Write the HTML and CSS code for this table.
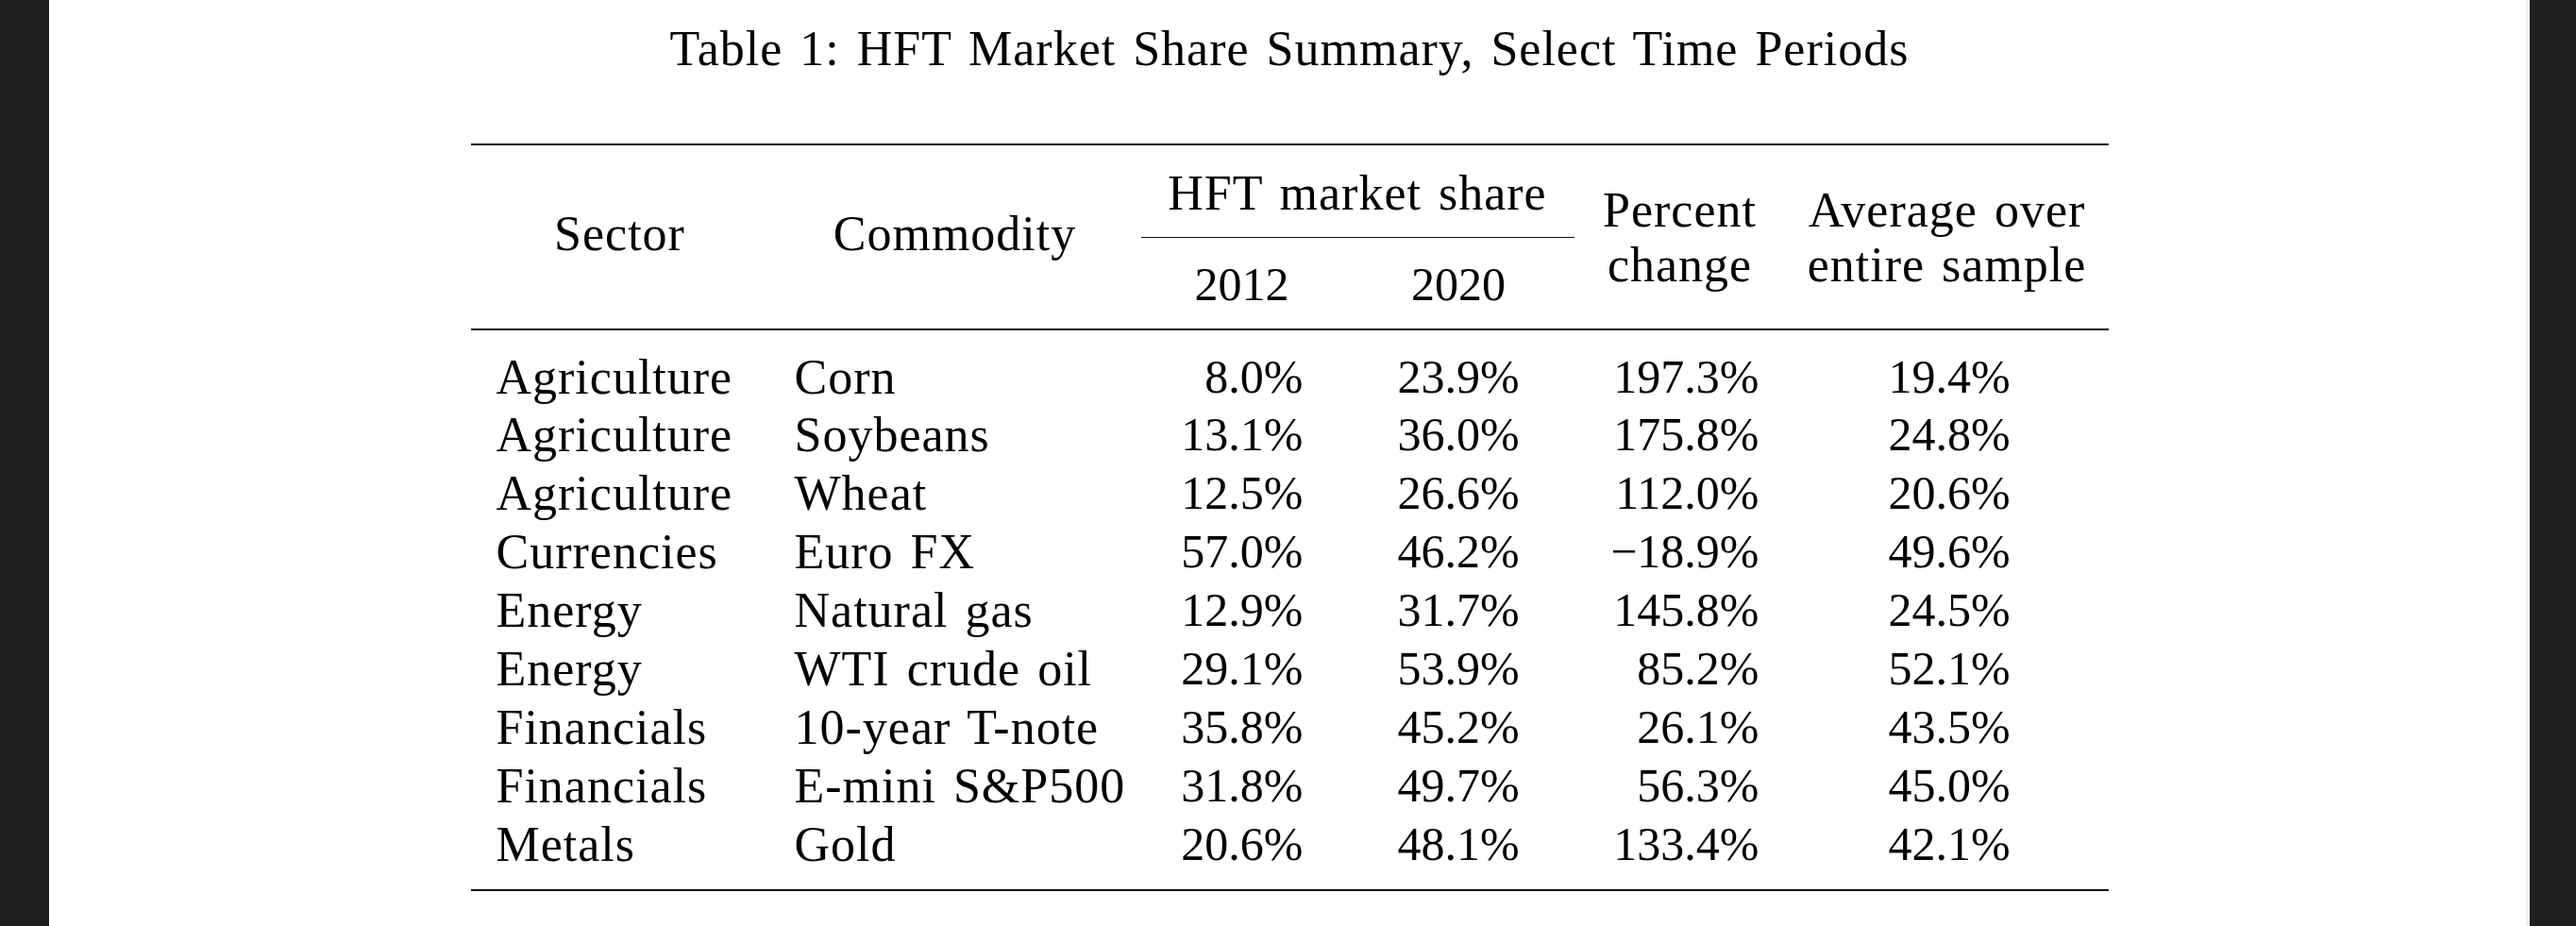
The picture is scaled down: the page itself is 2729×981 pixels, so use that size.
FILE: index.html
```html
<!DOCTYPE html>
<html lang="en">
<head>
<meta charset="utf-8">
<title>Table 1: HFT Market Share Summary, Select Time Periods</title>
<link rel="stylesheet" href="styles.css">
</head>
<body>
<div class="page">
  <h1 class="caption">Table 1: HFT Market Share Summary, Select Time Periods</h1>
  <div class="tbl">
    <div class="thead">
      <div class="h-sector">Sector</div>
      <div class="h-commodity">Commodity</div>
      <div class="h-hft">HFT market share</div>
      <div class="h-y1 num">2012</div>
      <div class="h-y2 num">2020</div>
      <div class="h-pct">Percent<br>change</div>
      <div class="h-avg">Average over<br>entire sample</div>
    </div>
    <div class="tbody">
      <div class="txt">Agriculture</div><div class="txt">Corn</div><div class="num c3"><span class="nb">8.0%</span></div><div class="num c4"><span class="nb">23.9%</span></div><div class="num c5"><span class="nb">197.3%</span></div><div class="num c6"><span class="nb">19.4%</span></div>
      <div class="txt">Agriculture</div><div class="txt">Soybeans</div><div class="num c3"><span class="nb">13.1%</span></div><div class="num c4"><span class="nb">36.0%</span></div><div class="num c5"><span class="nb">175.8%</span></div><div class="num c6"><span class="nb">24.8%</span></div>
      <div class="txt">Agriculture</div><div class="txt">Wheat</div><div class="num c3"><span class="nb">12.5%</span></div><div class="num c4"><span class="nb">26.6%</span></div><div class="num c5"><span class="nb">112.0%</span></div><div class="num c6"><span class="nb">20.6%</span></div>
      <div class="txt">Currencies</div><div class="txt">Euro FX</div><div class="num c3"><span class="nb">57.0%</span></div><div class="num c4"><span class="nb">46.2%</span></div><div class="num c5"><span class="nb">&minus;18.9%</span></div><div class="num c6"><span class="nb">49.6%</span></div>
      <div class="txt">Energy</div><div class="txt">Natural gas</div><div class="num c3"><span class="nb">12.9%</span></div><div class="num c4"><span class="nb">31.7%</span></div><div class="num c5"><span class="nb">145.8%</span></div><div class="num c6"><span class="nb">24.5%</span></div>
      <div class="txt">Energy</div><div class="txt">WTI crude oil</div><div class="num c3"><span class="nb">29.1%</span></div><div class="num c4"><span class="nb">53.9%</span></div><div class="num c5"><span class="nb">85.2%</span></div><div class="num c6"><span class="nb">52.1%</span></div>
      <div class="txt">Financials</div><div class="txt">10-year T-note</div><div class="num c3"><span class="nb">35.8%</span></div><div class="num c4"><span class="nb">45.2%</span></div><div class="num c5"><span class="nb">26.1%</span></div><div class="num c6"><span class="nb">43.5%</span></div>
      <div class="txt">Financials</div><div class="txt">E-mini S&amp;P500</div><div class="num c3"><span class="nb">31.8%</span></div><div class="num c4"><span class="nb">49.7%</span></div><div class="num c5"><span class="nb">56.3%</span></div><div class="num c6"><span class="nb">45.0%</span></div>
      <div class="txt">Metals</div><div class="txt">Gold</div><div class="num c3"><span class="nb">20.6%</span></div><div class="num c4"><span class="nb">48.1%</span></div><div class="num c5"><span class="nb">133.4%</span></div><div class="num c6"><span class="nb">42.1%</span></div>
    </div>
  </div>
</div>
</body>
</html>
```
FILE: styles.css
```css
* { box-sizing: border-box; }
html, body { margin: 0; padding: 0; }
body {
  background: #1f1f1f;
  font-family: "Liberation Serif", "Times New Roman", serif;
  color: #000;
  width: 2729px;
  height: 981px;
  overflow: hidden;
}
.page {
  margin-left: 52px;
  width: 2628px;
  height: 981px;
  background: #fff;
  box-shadow: inset -4px 0 0 #efefef;
  padding-top: 22px;
}
.caption {
  margin: 0;
  font-weight: normal;
  font-size: 52px;
  line-height: 60px;
  letter-spacing: 1px;
  word-spacing: 4px;
  text-align: center;
}
.tbl {
  width: 1735px;
  margin: 70px auto 0;
  border-top: 2px solid #111;
  border-bottom: 2px solid #111;
  font-size: 52px;
  letter-spacing: 1px;
  word-spacing: 4px;
}
.thead {
  display: grid;
  grid-template-columns: 316px 394px 214px 245px 224px 342px;
  grid-template-rows: 98px 96px;
  border-bottom: 2px solid #111;
  text-align: center;
  white-space: nowrap;
}
.h-sector { grid-column: 1; grid-row: 1 / 3; padding-top: 63.5px; line-height: 60px; }
.h-commodity { grid-column: 2; grid-row: 1 / 3; padding-top: 63.5px; line-height: 60px; }
.h-hft {
  grid-column: 3 / 5;
  grid-row: 1;
  padding-top: 20.5px;
  line-height: 60px;
  border-bottom: 1px solid #111;
}
.h-y1 { grid-column: 3; grid-row: 2; padding-top: 18.5px; line-height: 60px; }
.h-y2 { grid-column: 4; grid-row: 2; padding-top: 18.5px; line-height: 60px; }
.h-pct { grid-column: 5; grid-row: 1 / 3; padding-top: 39.5px; line-height: 58px; }
.h-avg { grid-column: 6; grid-row: 1 / 3; padding-top: 39.5px; line-height: 58px; }

.tbody {
  display: grid;
  grid-template-columns: 316px 394px 214px 245px 224px 342px;
  grid-auto-rows: 61.9px;
  padding: 18.5px 0 16.4px;
  line-height: 61.9px;
  white-space: nowrap;
}
.txt { padding-left: 27px; }
.num {
  font-size: 50px;
  letter-spacing: 0;
  text-align: center;
}
.nb { display: inline-block; text-align: right; }
.c3 .nb { width: 130px; }
.c4 .nb { width: 129px; }
.c5 .nb { width: 168px; }
.c6 .nb { width: 124px; }
```
